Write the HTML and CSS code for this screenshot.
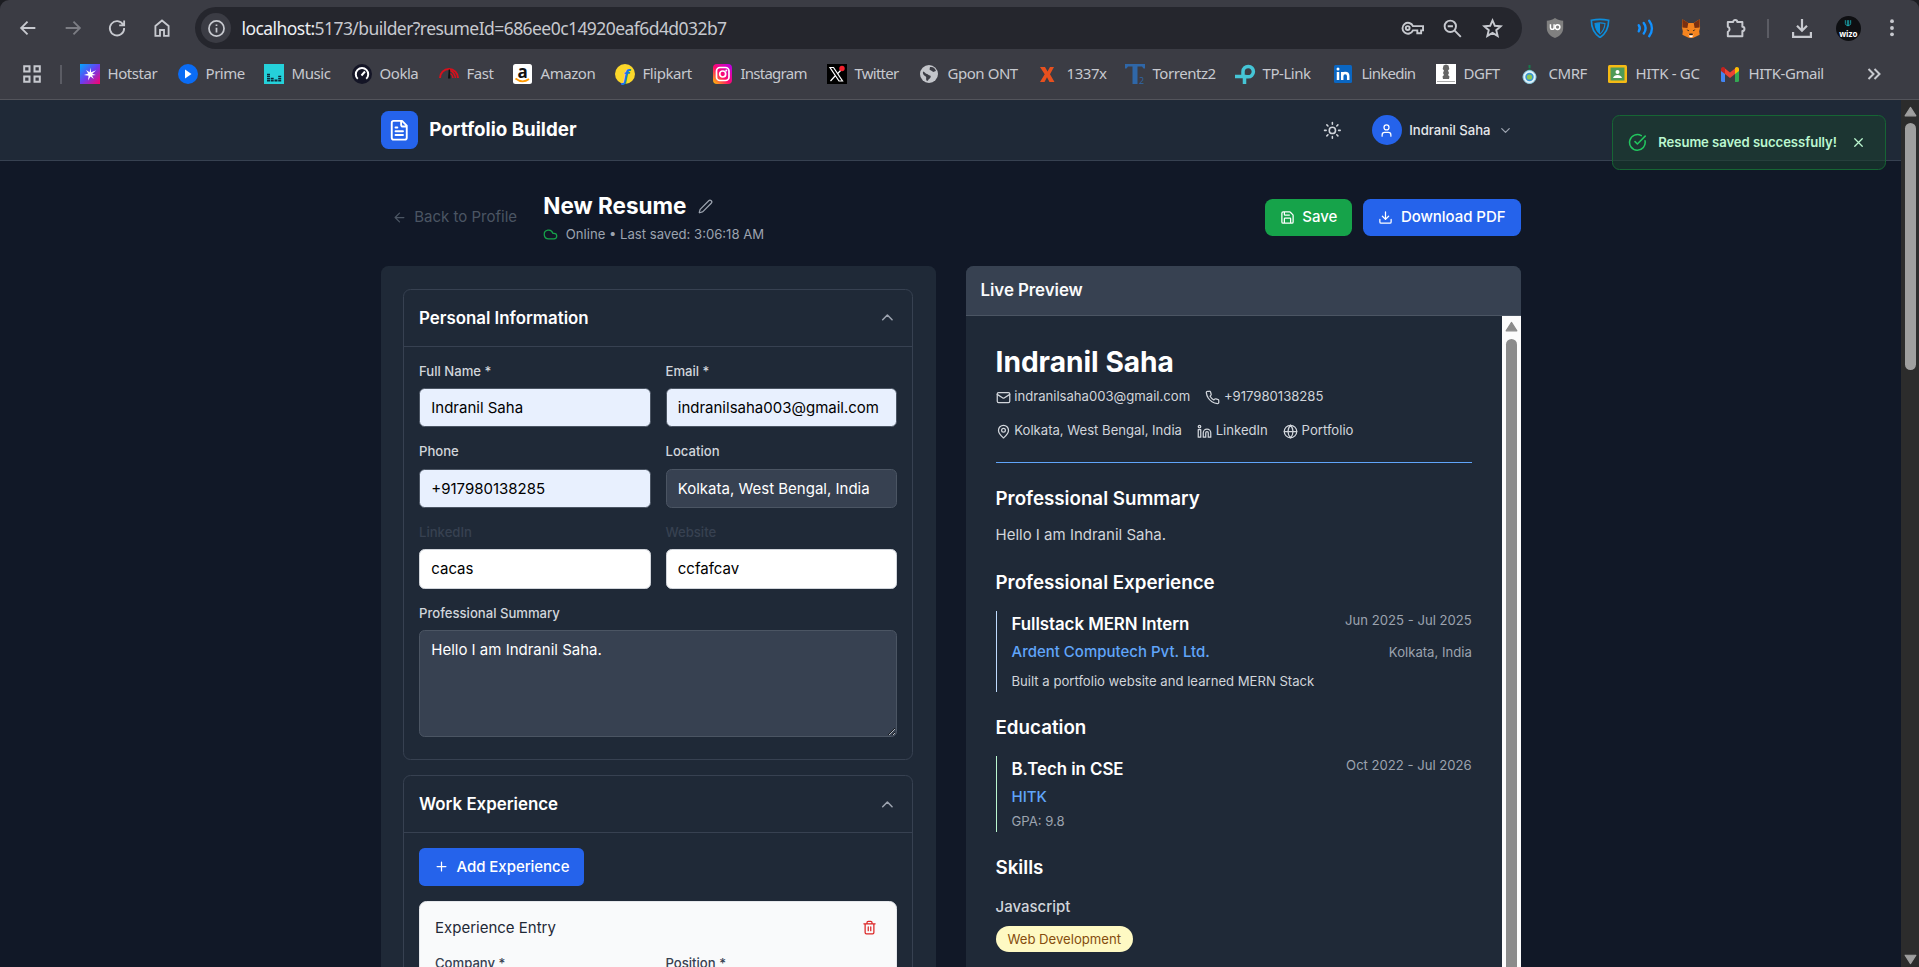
FILE: index.html
```html
<!DOCTYPE html>
<html lang="en">
<head>
<meta charset="utf-8">
<title>Portfolio Builder</title>
<link rel="stylesheet" href="styles.css">
</head>
<body>
<div class="browser">
  <div class="toolbar">
    <svg class="nav" viewBox="0 0 24 24"><path d="M20 12H5M11.500 5L4.500 12l7 7"/></svg>
    <svg class="nav dim" viewBox="0 0 24 24"><path d="M4 12h15M12.500 5l7 7-7 7"/></svg>
    <svg class="nav" viewBox="0 0 24 24"><path d="M18.800 8.500A7.800 7.800 0 1 0 19.800 12M19.800 3.800v5.400h-5.400"/></svg>
    <svg class="nav" viewBox="0 0 24 24"><path d="M4.800 20.500V9.800L12 3.800l7.200 6v10.700h-5v-6.300H9.800v6.300z"/></svg>
    <div class="address">
      <span class="site-info"><svg viewBox="0 0 24 24"><circle cx="12" cy="12" r="9.500"/><path d="M12 11v6M12 7v1.800"/></svg></span>
      <span class="url"><b>localhost:</b>5173/builder?resumeId=686ee0c14920eaf6d4d032b7</span>
      <svg class="key" viewBox="0 0 24 14"><path d="M12.500 5h10.500v4.500h-2v3h-4v-3h-4.500A5.700 5.700 0 1 1 12.500 5z"/><circle cx="7" cy="7" r="2"/></svg>
      <svg class="act" viewBox="0 0 24 24"><circle cx="9.500" cy="9.500" r="6.500"/><path d="M6.500 9.500h6M14.500 14.500l7 7"/></svg>
      <svg class="act" viewBox="0 0 24 24"><path d="M12 2.800l2.700 6.100 6.700.6-5.100 4.400 1.600 6.600L12 17l-5.900 3.500 1.600-6.600-5.100-4.400 6.700-.6z"/></svg>
    </div>
    <div class="extensions">
      <svg viewBox="0 0 22 22"><path fill="#808080" d="M11 0c3 2 6 3 9 3v8c0 6-4 9-9 11-5-2-9-5-9-11V3c3 0 6-1 9-3z"/><path d="M6 7v3.500a2 2 0 0 0 4 0V7M10 7v5.500" fill="none" stroke="#fff" stroke-width="1.600"/><circle cx="13.800" cy="10" r="2.600" fill="none" stroke="#fff" stroke-width="1.600"/></svg>
      <svg viewBox="0 0 22 22" fill="none" stroke="#0d8ddb" stroke-width="1.800"><path d="M1.500 2.500c6-1.200 13-1.200 19 0C20.500 11 17 17.500 11 21.500 5 17.500 1.500 11 1.500 2.500z"/><path d="M5.500 6c3.500-.8 7.500-.8 11 0-.3 5-2 8.500-5.500 11.500C7.500 14.500 5.800 11 5.500 6z" stroke-width="1.200"/><path fill="#0d8ddb" stroke="none" d="M11 5.500v12C7.500 14.500 5.800 11 5.500 6z"/></svg>
      <svg viewBox="0 0 22 22" fill="none" stroke="#1291ff" stroke-width="2.600" stroke-linecap="round"><path d="M3 8c1.500 2 1.500 4.500 0 6.500M8.500 5.500c2.600 3.500 2.600 8 0 11.500M14.500 3c4 5 4 12 0 17"/></svg>
      <svg viewBox="0 0 22 22"><path fill="#f5841f" d="M1.500 1.500l6.500 4h6l6.500-4 .5 9-1 4 .5 4-4.500 2-3 1.500h-4L6 20.500l-4.500-2 .5-4-1-4z"/><path fill="#7a2f10" d="M1.500 1.500L8 5.500 7 11l-5.500-.5zM20.500 1.500L14 5.500l1 5.500 5.500-.5z"/><path fill="#ffb37a" d="M8 18h6l-1.500 3h-3z"/><path fill="#fff" d="M9 19.500h4l-.8 1.700H9.800z"/><path fill="#222" d="M9.300 17h3.400l.4 1.800H8.900zM6 12.500l3 1.200-1 1zM16 12.500l-3 1.200 1 1z"/></svg>
      <svg viewBox="0 0 22 22" fill="none" stroke="#c7c9cf" stroke-width="2.200" stroke-linejoin="round"><path d="M2 4.500h5.800a2.300 2.300 0 0 1 4.600 0H18v5.200a2.300 2.300 0 0 1 0 4.600V20H2v-4.800a3 3 0 0 0 0-5.600z"/></svg>
      <i class="divider"></i>
      <svg viewBox="0 0 22 22" fill="none" stroke="#c7c9cf" stroke-width="2.400"><path d="M11 1v13M5.500 8.500L11 14l5.500-5.500M1.200 15.500v5.300h19.600v-5.300"/></svg>
      <span class="avatar"><svg viewBox="0 0 12 12" fill="none" stroke="#1ba8b0" stroke-width="1.300"><path d="M2 1v5c0 4 8 4 8 0V1M5 1v9M7 1v9"/></svg>wizo</span>
      <svg viewBox="0 0 22 22" fill="#c7c9cf"><circle cx="11" cy="3.500" r="2.100"/><circle cx="11" cy="11" r="2.100"/><circle cx="11" cy="18" r="2.100"/></svg>
    </div>
  </div>
  <div class="bookmarks">
    <svg class="apps" viewBox="0 0 18 18"><path d="M1.200 1.200h5.300v5.300H1.200zM11.500 1.200h5.300v5.300h-5.300zM1.200 11.500h5.300v5.300H1.200zM11.500 11.500h5.300v5.300h-5.300z"/></svg>
    <i class="divider"></i>
    <div class="links">
      <a><svg viewBox="0 0 20 20"><defs><linearGradient id="hs" x1="0" y1="0" x2="1" y2="1"><stop offset="0" stop-color="#00a8ff"/><stop offset=".5" stop-color="#6a3df0"/><stop offset="1" stop-color="#ff0068"/></linearGradient></defs><path fill="url(#hs)" d="M0 0h20v20H0z"/><path fill="#fff" d="M10.500 3.500l.6 4.800 5-2-3.800 3.500 3.500 1.200-3.800.5 1.800 3.500-3.300-2.500L8 16.500l.6-4.700L4 11l4.200-1.400L6 6l3.600 2.300z"/></svg><span>Hotstar</span></a>
      <a><svg viewBox="0 0 20 20"><circle cx="10" cy="10" r="10" fill="#0a6cf5"/><path fill="#fff" d="M7 5.500v9l6.500-4.500z"/></svg><span>Prime</span></a>
      <a><svg viewBox="0 0 20 20"><path fill="#25d1da" d="M0 0h20v20H0z"/><path stroke="#0b2a3a" stroke-width="3" stroke-dasharray="1.500 .6" d="M4.500 17.500V9M8.200 17.500v-4.500M12 17.500v-2.500M15.700 17.500v-6"/></svg><span>Music</span></a>
      <a><svg viewBox="0 0 20 20"><circle cx="10" cy="10" r="10" fill="#141526"/><path fill="none" stroke="#fff" stroke-width="2" d="M5.800 14.800a6.200 6.200 0 1 1 8.400 0M9.500 11.500l3.500-4"/></svg><span>Ookla</span></a>
      <a><svg viewBox="0 0 20 20" fill="none" stroke="#d8101c"><path stroke-width="2" d="M1 14a9 9 0 0 1 18 0"/><path fill="#111" stroke="none" d="M9.700 5.500h1.300l.5 9H9z"/><path stroke-width="1.500" d="M11.500 6.500c3 1.500 4.500 4 5 7.500M11.500 9.500c1.500 1 2.300 2.500 2.500 4.500"/></svg><span>Fast</span></a>
      <a><svg viewBox="0 0 20 20"><rect width="19" height="20" rx="2.500" fill="#fff"/><text x="9.500" y="13.500" text-anchor="middle" class="g-amazon">a</text><path d="M2.500 14.500c4.500 3.500 9.500 3.500 13.500.5" fill="none" stroke="#f90" stroke-width="1.700"/></svg><span>Amazon</span></a>
      <a><svg viewBox="0 0 20 20"><circle cx="10" cy="10" r="10" fill="#fbd72b"/><text x="11" y="17" text-anchor="middle" class="g-flip">f</text></svg><span>Flipkart</span></a>
      <a><svg viewBox="0 0 20 20"><defs><linearGradient id="ig" x1="0" y1="1" x2="1" y2="0"><stop offset="0" stop-color="#ffc800"/><stop offset=".45" stop-color="#ff0a6c"/><stop offset="1" stop-color="#b400f0"/></linearGradient></defs><rect width="19" height="20" rx="4" fill="url(#ig)"/><rect x="3.500" y="3.500" width="12.500" height="13" rx="3.500" fill="none" stroke="#fff" stroke-width="1.700"/><circle cx="9.700" cy="10" r="3" fill="none" stroke="#fff" stroke-width="1.700"/><circle cx="13.300" cy="6.400" r="1" fill="#fff"/></svg><span class="tight">Instagram</span></a>
      <a><svg viewBox="0 0 20 20"><path d="M0 0h20v20H0z"/><path fill="none" stroke="#fff" stroke-width="1.200" d="M3 3.500h3.500l9 13.500H12zM14.500 5.500L10.800 9.500M8.500 11.500l-5 5.500"/><circle cx="15" cy="4.500" r="2.700" fill="#f4212e"/></svg><span class="tight">Twitter</span></a>
      <a><svg viewBox="0 0 20 20"><circle cx="9" cy="10" r="9" fill="#c3c5ca"/><path fill="#3c3d45" d="M3 7.500c2 0 2 2.500 4 2.500 1 0 1.500 1.500 3 1.500 1.500.5.500 3-1 3.500-1 1-1 2-2 2-2-2 .5-4-2-5C3.500 11 2.500 9.500 3 7.500zM10 3c3-.5 5 1 6 4-2 .5-2 1.500-3.500.5C12 6.500 10 6.500 9.500 5.500z"/></svg><span>Gpon ONT</span></a>
      <a><svg viewBox="0 0 20 20"><path fill="#e8501e" d="M1 3h5l2.500 4.500L11 3h4l-4 7.300L15.500 18h-5L8 13.200 5.500 18H1l4.700-7.700z"/></svg><span>1337x</span></a>
      <a><svg viewBox="0 0 20 20" fill="#2f67a8"><path d="M0 0h20v4.500h-1.500L17 2.500h-4.500V20h-5V2.500H3L1.500 4.500H0z"/><text x="14" y="20" class="g-two">2</text></svg><span>Torrentz2</span></a>
      <a><svg viewBox="0 0 20 20" fill="none" stroke="#45c5d6" stroke-width="3.500"><path d="M8 11V7.500a5.200 5.200 0 1 1 5 5.300H11M0 12.500h9.500V20"/></svg><span>TP-Link</span></a>
      <a><svg viewBox="0 0 20 20"><rect y="1" width="18" height="18" rx="1.500" fill="#0a66c2"/><path stroke="#fff" stroke-width="2.500" fill="none" d="M4 8v8M8.200 8v8M8.200 12c0-4 6-4 6 0v4"/><circle cx="4" cy="5" r="1.500" fill="#fff"/></svg><span class="tight">Linkedin</span></a>
      <a><svg viewBox="0 0 20 20"><path fill="#fff" d="M0 0h20v20H0z"/><path fill="#666" d="M7.500 1.500l2.500-1 2.500 1 .8 3.500-1.300 1.500L13 9l-1 2 1.500 1.500L13 15H7l-.5-2.500L8 11 7 9l1-2.500L6.700 5z"/><path stroke="#aaa" d="M1 17.500h18"/></svg><span>DGFT</span></a>
      <a><svg viewBox="0 0 20 20"><path stroke="#18794c" stroke-width="2" stroke-dasharray="3 .8" d="M8.500 1v6"/><circle cx="8.500" cy="13" r="6.500" fill="#dff2fa" stroke="#8fd0e6"/><circle cx="8.500" cy="13" r="3.400" fill="#8cc653" stroke="#3b93cf" stroke-width="1.600"/></svg><span>CMRF</span></a>
      <a><svg viewBox="0 0 20 20"><rect y="1" width="19" height="18" rx="1.500" fill="#f5ba14"/><path fill="#4f9b57" d="M2.500 3.500h14v13h-14z"/><circle cx="9.500" cy="8" r="2" fill="#fff"/><path fill="#fff" d="M5 14c1-4 8-4 9 0z"/></svg><span class="loose">HITK - GC</span></a>
      <a><svg viewBox="0 0 20 20"><path fill="#4285f4" d="M0 6l4 3v9H1.500A1.500 1.500 0 0 1 0 16.500z"/><path fill="#34a853" d="M18 6l-4 3v9h2.500a1.500 1.500 0 0 0 1.500-1.500z"/><path fill="#ea4335" d="M4 4.500l5 4 5-4V10l-5 4-5-4z"/><path fill="#c5221f" d="M0 5c0-2 2.500-3 4-1v6L0 7z"/><path fill="#fbbc04" d="M18 5c0-2-2.500-3-4-1v6l4-3z"/></svg><span>HITK-Gmail</span></a>
    </div>
    <svg class="more" viewBox="0 0 14 14"><path d="M1.500 2l5 5-5 5M7.500 2l5 5-5 5"/></svg>
  </div>
</div>

<div class="viewport">
  <div class="app">
    <header class="site-header">
      <div class="container header-row">
        <div class="brand">
          <span class="logo"><svg class="ic" viewBox="0 0 24 24"><path d="M15 2H6a2 2 0 0 0-2 2v16a2 2 0 0 0 2 2h12a2 2 0 0 0 2-2V7zM14 2v4a2 2 0 0 0 2 2h4M10 9H8M16 13H8M16 17H8"/></svg></span>
          <span class="brand-name">Portfolio Builder</span>
        </div>
        <div class="user-area">
          <svg class="ic sun" viewBox="0 0 24 24"><circle cx="12" cy="12" r="4"/><path d="M12 2v2M12 20v2M4.930 4.930l1.410 1.410M17.660 17.660l1.410 1.410M2 12h2M20 12h2M6.340 17.660l-1.410 1.410M19.070 4.930l-1.410 1.410"/></svg>
          <div class="user">
            <span class="user-pic"><svg class="ic" viewBox="0 0 24 24"><path d="M19 21v-2a4 4 0 0 0-4-4H9a4 4 0 0 0-4 4v2"/><circle cx="12" cy="7" r="4"/></svg></span>
            <span class="user-name">Indranil Saha</span>
            <svg class="ic caret" viewBox="0 0 24 24"><path d="M6 9l6 6 6-6"/></svg>
          </div>
        </div>
      </div>
    </header>

    <main class="container main">
      <div class="page-head">
        <a class="back"><svg class="ic" viewBox="0 0 24 24"><path d="M12 19l-7-7 7-7M19 12H5"/></svg>Back to Profile</a>
        <div class="title-block">
          <h1>New Resume<svg class="ic" viewBox="0 0 24 24"><path d="M21.174 6.812a1 1 0 0 0-3.986-3.987L3.842 16.174a2 2 0 0 0-.5.830l-1.321 4.352a.5.500 0 0 0 .623.622l4.353-1.320a2 2 0 0 0 .830-.497z"/></svg></h1>
          <p class="status"><svg class="ic" viewBox="0 0 24 24"><path d="M17.500 19H9a7 7 0 1 1 6.710-9h1.790a4.500 4.500 0 1 1 0 9z"/></svg>Online • Last saved: 3:06:18 AM</p>
        </div>
        <div class="head-actions">
          <button class="btn green"><svg class="ic" viewBox="0 0 24 24"><path d="M15.200 3a2 2 0 0 1 1.400.6l3.800 3.800a2 2 0 0 1 .6 1.400V19a2 2 0 0 1-2 2H5a2 2 0 0 1-2-2V5a2 2 0 0 1 2-2zM17 21v-7a1 1 0 0 0-1-1H8a1 1 0 0 0-1 1v7M7 3v4a1 1 0 0 0 1 1h7"/></svg>Save</button>
          <button class="btn blue"><svg class="ic" viewBox="0 0 24 24"><path d="M21 15v4a2 2 0 0 1-2 2H5a2 2 0 0 1-2-2v-4M7 10l5 5 5-5M12 15V3"/></svg>Download PDF</button>
        </div>
      </div>

      <div class="columns">
        <div class="panel editor">
          <section class="card">
            <div class="card-head"><h2>Personal Information</h2><svg class="ic" viewBox="0 0 24 24"><path d="M18 15l-6-6-6 6"/></svg></div>
            <div class="card-body">
              <div class="fields">
                <label>Full Name *<input class="autofill" value="Indranil Saha"></label>
                <label>Email *<input class="autofill" value="indranilsaha003@gmail.com"></label>
                <label>Phone<input class="autofill" value="+917980138285"></label>
                <label>Location<input value="Kolkata, West Bengal, India"></label>
                <label class="faded">LinkedIn<input class="plain" value="cacas"></label>
                <label class="faded">Website<input class="plain" value="ccfafcav"></label>
                <label class="wide">Professional Summary<textarea rows="4">Hello I am Indranil Saha.</textarea></label>
              </div>
            </div>
          </section>
          <section class="card">
            <div class="card-head"><h2>Work Experience</h2><svg class="ic" viewBox="0 0 24 24"><path d="M18 15l-6-6-6 6"/></svg></div>
            <div class="card-body">
              <button class="btn blue add"><svg class="ic" viewBox="0 0 24 24"><path d="M5 12h14M12 5v14"/></svg>Add Experience</button>
              <div class="entry">
                <div class="entry-head">Experience Entry<svg class="ic" viewBox="0 0 24 24"><path d="M3 6h18M19 6v14a2 2 0 0 1-2 2H7a2 2 0 0 1-2-2V6M8 6V4a2 2 0 0 1 2-2h4a2 2 0 0 1 2 2v2M10 11v6M14 11v6"/></svg></div>
                <div class="fields">
                  <label>Company *<input class="plain"></label>
                  <label>Position *<input class="plain"></label>
                </div>
              </div>
            </div>
          </section>
        </div>

        <div class="panel preview">
          <div class="preview-head">Live Preview</div>
          <div class="preview-body">
            <article class="resume">
              <h2 class="name">Indranil Saha</h2>
              <div class="contacts">
                <span><svg class="ic" viewBox="0 0 24 24"><rect x="2" y="4" width="20" height="16" rx="2"/><path d="M22 7l-8.970 5.700a1.940 1.940 0 0 1-2.060 0L2 7"/></svg>indranilsaha003@gmail.com</span>
                <span><svg class="ic" viewBox="0 0 24 24"><path d="M22 16.920v3a2 2 0 0 1-2.180 2 19.790 19.790 0 0 1-8.630-3.070 19.500 19.500 0 0 1-6-6 19.790 19.790 0 0 1-3.070-8.670A2 2 0 0 1 4.110 2h3a2 2 0 0 1 2 1.720 12.840 12.840 0 0 0 .7 2.810 2 2 0 0 1-.45 2.110L8.090 9.910a16 16 0 0 0 6 6l1.270-1.270a2 2 0 0 1 2.110-.45 12.840 12.840 0 0 0 2.810.7A2 2 0 0 1 22 16.920z"/></svg>+917980138285</span>
              </div>
              <div class="contacts">
                <span><svg class="ic" viewBox="0 0 24 24"><path d="M20 10c0 5-5.500 10.200-7.400 11.800a1 1 0 0 1-1.200 0C9.500 20.200 4 15 4 10a8 8 0 0 1 16 0"/><circle cx="12" cy="10" r="3"/></svg>Kolkata, West Bengal, India</span>
                <span><svg class="ic" viewBox="0 0 24 24"><path d="M16 8a6 6 0 0 1 6 6v7h-4v-7a2 2 0 0 0-4 0v7h-4v-7a6 6 0 0 1 6-6zM2 9h4v12H2z"/><circle cx="4" cy="4" r="2"/></svg>LinkedIn</span>
                <span><svg class="ic" viewBox="0 0 24 24"><circle cx="12" cy="12" r="10"/><path d="M12 2a14.500 14.500 0 0 0 0 20 14.500 14.500 0 0 0 0-20M2 12h20"/></svg>Portfolio</span>
              </div>
              <hr>
              <h3>Professional Summary</h3>
              <p class="summary">Hello I am Indranil Saha.</p>
              <h3>Professional Experience</h3>
              <div class="item job">
                <div class="item-row">
                  <div><h4>Fullstack MERN Intern</h4><p class="org">Ardent Computech Pvt. Ltd.</p></div>
                  <div class="meta"><p>Jun 2025 - Jul 2025</p><p>Kolkata, India</p></div>
                </div>
                <p class="desc">Built a portfolio website and learned MERN Stack</p>
              </div>
              <h3>Education</h3>
              <div class="item school">
                <div class="item-row">
                  <div><h4>B.Tech in CSE</h4><p class="org">HITK</p><p class="gpa">GPA: 9.8</p></div>
                  <div class="meta"><p>Oct 2022 - Jul 2026</p></div>
                </div>
              </div>
              <h3>Skills</h3>
              <p class="skill-group">Javascript</p>
              <span class="pill">Web Development</span>
            </article>
            <div class="scrollbar light">
              <svg viewBox="0 0 12 10"><path d="M6 1.200L11 9H1z"/></svg>
              <i></i>
            </div>
          </div>
        </div>
      </div>
    </main>
  </div>
  <div class="scrollbar dark">
    <svg viewBox="0 0 12 10"><path d="M6 1.200L11 9H1z"/></svg>
    <i></i>
    <svg class="down" viewBox="0 0 12 10"><path d="M6 8.800L1 1h10z"/></svg>
  </div>
  <div class="toast">
    <svg class="ic ok" viewBox="0 0 24 24"><path d="M21.801 10A10 10 0 1 1 17 3.335M9 11l3 3L22 4"/></svg>
    <span>Resume saved successfully!</span>
    <svg class="ic close" viewBox="0 0 24 24"><path d="M18 6L6 18M6 6l12 12"/></svg>
  </div>
</div>
</body>
</html>
```

FILE: styles.css
```css
html { font-size: 15px; }
* { box-sizing: border-box; margin: 0; }
body {
  height: 967px;
  overflow: hidden;
  display: flex;
  flex-direction: column;
  background: #1c1d22;
  font: 400 1rem/1.5 Inter, sans-serif;
}
svg { display: block; flex: none; }
.ic { fill: none; stroke: currentColor; stroke-width: 2; stroke-linecap: round; stroke-linejoin: round; width: 1rem; height: 1rem; }

/* Browser chrome */
.browser {
  flex: none;
  height: 100px;
  background: #3b3c44;
  border-bottom: 1px solid #53545b;
  border-radius: 9px 9px 0 0;
  font-family: "Noto Sans", sans-serif;
  color: #c7c9cf;
}
.toolbar { display: flex; align-items: center; height: 49px; padding: 7px 0 0 17px; }
.nav { width: 22px; height: 22px; margin-right: 22.500px; fill: none; stroke: #c7c9cf; stroke-width: 2; }
.nav.dim { stroke: #7c7d84; }
.address {
  display: flex;
  flex: none;
  align-items: center;
  width: 1327px;
  height: 42px;
  padding: 0 19px 0 6px;
  border-radius: 21px;
  background: #25262d;
}
.site-info { display: grid; place-items: center; width: 30px; height: 30px; border-radius: 50%; background: #3b3c44; }
.site-info svg { width: 19px; height: 19px; fill: none; stroke: #dcdde1; stroke-width: 2.200; }
.url { flex: 1; margin-left: 10.500px; font-size: 17.500px; letter-spacing: -.56px; }
.url b { font-weight: 400; color: #eef0f3; }
.address svg { fill: none; stroke: #c7c9cf; }
.key { width: 23px; height: 14px; stroke-width: 2; margin-right: 18px; }
.act { width: 21px; height: 21px; stroke-width: 2.200; margin-right: 19px; }
.act:last-child { margin-right: 0; }
.extensions { display: flex; align-items: center; flex: none; margin-left: 23px; }
.extensions > svg { width: 20px; height: 20px; margin-right: 25.300px; }
.divider { flex: none; width: 2px; height: 19px; background: #5b5c64; }
.extensions .divider { margin: 0 23.500px 0 -4.500px; }
.avatar {
  display: flex;
  flex-direction: column;
  align-items: center;
  width: 25px;
  height: 25px;
  margin: 0 21px 0 -2px;
  border-radius: 50%;
  background: #0e0f12;
  color: #fff;
  font: 700 8px/8px "Open Sans", sans-serif;
}
.avatar svg { width: 8px; height: 11px; margin: 2px 0 1px; }
.bookmarks { display: flex; align-items: center; height: 50px; padding: 0 0 0 23px; }
.apps { width: 18px; height: 18px; fill: none; stroke: #c7c9cf; stroke-width: 2; }
.bookmarks .divider { margin: 0 18px 0 19px; }
.links {
  display: grid;
  grid-template-columns: 98px 86px 88px 87px 74px 102px 98px 114px 93px 119px 86px 110px 99px 102px 85px 87px 113px 120px;
  font-size: 15px;
  line-height: 22px;
  letter-spacing: -.45px;
  white-space: nowrap;
}
.links a { display: flex; align-items: center; gap: 7.500px; padding-bottom: 1px; }
.links span { padding-bottom: 2px; }
.links .tight { letter-spacing: -.75px; }
.links .loose { letter-spacing: -.3px; }
.links svg { width: 20px; height: 20px; overflow: visible; }
.more { width: 14px; height: 14px; margin-left: 26px; fill: none; stroke: #c7c9cf; stroke-width: 2; }
.g-amazon { font: 700 17px "Open Sans", sans-serif; fill: #111; }
.g-flip { font: italic 700 16px "Open Sans", sans-serif; fill: #1677e8; }
.g-two { font: 9px "Open Sans", sans-serif; }

/* Page */
.viewport { position: relative; display: flex; flex: 1; min-height: 0; background: #111827; }
.app { flex: 1; min-width: 0; overflow: hidden; color: #fff; }
.container { width: 1140px; margin: 0 auto; }
.site-header { height: 61px; background: #1f2937; border-bottom: 1px solid #374151; }
.header-row { display: flex; align-items: center; justify-content: space-between; height: 60px; }
.brand { display: flex; align-items: center; gap: .75rem; }
.logo { display: grid; place-items: center; width: 2.500rem; height: 2.500rem; border-radius: .5rem; background: #2563eb; }
.logo .ic { width: 1.500rem; height: 1.500rem; }
.brand-name { font-size: 1.250rem; font-weight: 700; }
.user-area { display: flex; align-items: center; gap: 30px; color: #d1d5db; padding-right: 7.500px; }
.sun { width: 1.250rem; height: 1.250rem; }
.user { display: flex; align-items: center; gap: .5rem; font-size: .875rem; font-weight: 500; color: #e5e7eb; }
.user-name { padding-top: 1px; }
.user-pic { display: grid; place-items: center; width: 2rem; height: 2rem; border-radius: 50%; background: #2563eb; color: #fff; }
.caret { color: #9ca3af; }

.main { padding-top: 30px; }
.page-head { display: flex; align-items: center; height: 52.500px; margin-bottom: 22.500px; }
.back { display: flex; align-items: center; gap: .5rem; padding-left: .75rem; color: #4b5563; width: 162.800px; }
.title-block h1 { display: flex; align-items: center; gap: .75rem; font-size: 1.500rem; line-height: 2rem; font-weight: 700; }
.title-block h1 .ic { color: #9ca3af; }
.status { display: flex; align-items: center; gap: .5rem; font-size: .875rem; line-height: 1.250rem; color: #9ca3af; margin-top: 3.750px; }
.status .ic { color: #16a34a; }
.head-actions { display: flex; gap: .75rem; margin-left: auto; }
.btn {
  display: flex;
  align-items: center;
  gap: .5rem;
  height: 2.500rem;
  padding: 0 1rem;
  border: 0;
  border-radius: .5rem;
  color: #fff;
  font: 500 1rem/1.500rem Inter, sans-serif;
  letter-spacing: -.05px;
}
.green { background: #16a34a; }
.blue { background: #2563eb; }

.columns { display: grid; grid-template-columns: 1fr 1fr; gap: 2rem; }
.panel { height: 900px; border-radius: .5rem; background: #1f2937; overflow: hidden; }
.editor { padding: 1.500rem; }
.card { border: 1px solid #374151; border-radius: .5rem; margin-bottom: 1rem; }
.card-head { display: flex; align-items: center; justify-content: space-between; padding: 1rem; border-bottom: 1px solid #374151; }
.card-head h2 { font-size: 1.125rem; line-height: 1.750rem; font-weight: 600; }
.card-head .ic { width: 1.250rem; height: 1.250rem; color: #9ca3af; }
.card-body { padding: 1rem; }
.fields { display: grid; grid-template-columns: 1fr 1fr; gap: 1rem; }
.fields label { display: block; font-size: .875rem; line-height: 1.250rem; font-weight: 500; color: #d1d5db; }
.fields .faded { color: #374151; }
.fields .wide { grid-column: 1 / -1; padding-bottom: 7px; }
input, textarea {
  display: block;
  width: 100%;
  margin-top: .5rem;
  padding: .5rem .75rem;
  border: 1px solid #4b5563;
  border-radius: .375rem;
  background: #374151;
  color: #fff;
  font: 400 1rem/1.500rem Inter, sans-serif;
}
input { height: 2.625rem; }
textarea { height: 7.125rem; padding-top: 8px; resize: vertical; }
.autofill { background: #e8f0fe; color: #000; }
.plain { background: #fff; color: #000; border-color: #d1d5db; }
.add { border-radius: .375rem; }
.entry { margin-top: 1rem; padding: 1rem; border: 1px solid #e5e7eb; border-radius: .5rem; background: #f9fafb; }
.entry-head { display: flex; align-items: center; justify-content: space-between; margin-bottom: 1rem; padding-right: 4px; color: #1f2937; }
.entry-head .ic { color: #dc2626; }
.entry .fields label { color: #374151; }

.preview { display: flex; flex-direction: column; }
.preview-head { padding: .75rem 1rem; font-size: 1.125rem; line-height: 1.750rem; font-weight: 600; letter-spacing: -.05px; background: #374151; border-bottom: 1px solid #4b5563; color: #f9fafb; }
.preview-body { display: flex; flex: 1; }
.resume { flex: 1; padding: 30.500px 2rem 2rem; }
.name { font-size: 1.875rem; line-height: 2.250rem; font-weight: 700; }
.contacts { display: flex; gap: 1rem; height: 34px; align-items: center; font-size: .875rem; color: #d1d5db; }
.contacts span { display: flex; align-items: center; gap: .25rem; }
.resume hr { height: 1px; border: 0; margin: 14px 0 22.500px; background: #60a5fa; }
.resume h3 { font-size: 1.250rem; line-height: 1.750rem; font-weight: 600; margin-bottom: 1rem; }
.summary { color: #d1d5db; line-height: 1.500rem; margin: -3px 0 24px; }
.item { padding-left: 1rem; border-left: 1px solid #bfdbfe; margin-bottom: 22.500px; }
.school { border-color: #bbf7d0; }
.item-row { display: flex; justify-content: space-between; }
.item h4 { font-size: 1.125rem; line-height: 1.750rem; font-weight: 600; letter-spacing: -.05px; margin-bottom: .25rem; }
.job { margin-top: -1px; }
.org { color: #60a5fa; font-weight: 500; }
.meta { display: flex; flex-direction: column; gap: 12.500px; font-size: .875rem; text-align: right; color: #9ca3af; }
.desc { margin-top: 9px; font-size: .875rem; color: #d1d5db; }
.job { margin-bottom: 23.500px; }
.gpa { margin-top: 3.500px; font-size: .875rem; color: #9ca3af; }
.skill-group { font-weight: 500; color: #d1d5db; margin-bottom: .5rem; }
.pill { display: inline-block; padding: .25rem 12px; border-radius: 99px; background: #fef9c3; color: #854d0e; font-size: .875rem; line-height: 1.250rem; }

.scrollbar { display: flex; flex-direction: column; align-items: center; flex: none; width: 18.750px; padding-top: 5px; }
.scrollbar svg { width: 13px; height: 11px; fill: #8b8b8b; stroke: #8b8b8b; stroke-width: 1; stroke-linejoin: round; }
.scrollbar i { width: 11px; border-radius: 6px; background: #8b8b8b; margin-top: 7px; }
.light { background: #fcfcfc; }
.light i { flex: 1; }
.dark { width: 18px; background: #2c2c2c; padding: 6px 0 2px; }
.dark svg { fill: #9f9f9f; stroke: #9f9f9f; }
.dark i { height: 247px; background: #9f9f9f; margin-top: 6px; }
.dark .down { margin-top: auto; }

.toast {
  position: absolute;
  top: 15px;
  right: 33px;
  display: flex;
  align-items: center;
  width: 274px;
  height: 55px;
  padding: 0 16px 0 15px;
  border: 1px solid #166534;
  border-radius: .5rem;
  background: rgba(27, 61, 47, .6);
  color: #bbf7d0;
  font-size: .875rem;
  font-weight: 600;
  letter-spacing: -.06px;
  white-space: nowrap;
}
.ok { width: 1.250rem; height: 1.250rem; color: #22c55e; margin-right: 11.500px; }
.close { margin-left: auto; margin-right: 3px; }
```
